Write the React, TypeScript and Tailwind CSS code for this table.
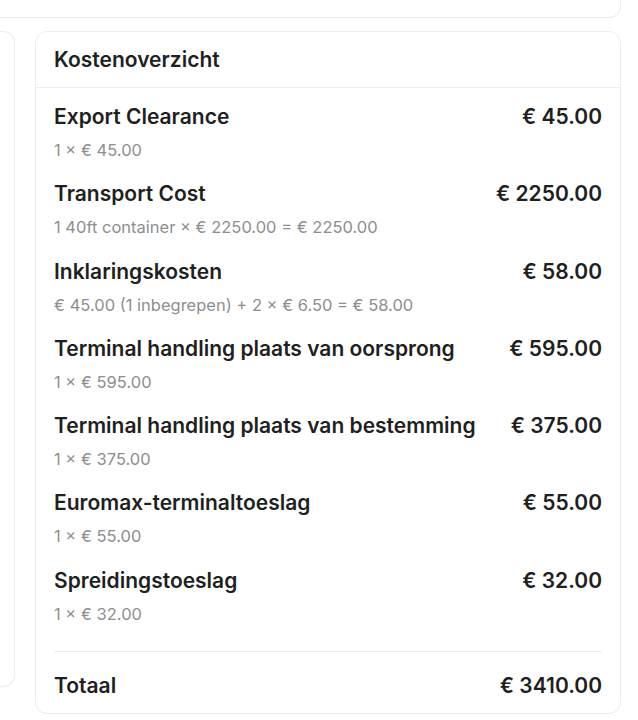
import React from "react";

type CostItem = {
  title: string;
  detail: string;
  amount: string;
};

const items: CostItem[] = [
  { title: "Export Clearance", detail: "1 × € 45.00", amount: "€ 45.00" },
  {
    title: "Transport Cost",
    detail: "1 40ft container × € 2250.00 = € 2250.00",
    amount: "€ 2250.00",
  },
  {
    title: "Inklaringskosten",
    detail: "€ 45.00 (1 inbegrepen) + 2 × € 6.50 = € 58.00",
    amount: "€ 58.00",
  },
  {
    title: "Terminal handling plaats van oorsprong",
    detail: "1 × € 595.00",
    amount: "€ 595.00",
  },
  {
    title: "Terminal handling plaats van bestemming",
    detail: "1 × € 375.00",
    amount: "€ 375.00",
  },
  { title: "Euromax-terminaltoeslag", detail: "1 × € 55.00", amount: "€ 55.00" },
  { title: "Spreidingstoeslag", detail: "1 × € 32.00", amount: "€ 32.00" },
];

const CostRow: React.FC<CostItem> = ({ title, detail, amount }) => (
  <div className="flex flex-col">
    <div className="flex items-start justify-between gap-4">
      <span className="text-[21px] leading-[28px] font-semibold whitespace-nowrap">{title}</span>
      <span className="text-[21px] leading-[28px] font-semibold whitespace-nowrap">
        {amount}
      </span>
    </div>
    <span className="mt-[9px] text-[16.5px] leading-5 text-[#8e8e8e]">
      {detail}
    </span>
  </div>
);

export default function App() {
  return (
    <div className="w-[638px] h-[720px] bg-white pr-[17px] flex flex-col overflow-hidden font-['Inter','Noto_Sans',sans-serif] text-[#1f1f1f]">
      <div className="h-[18px] w-full border-r border-b border-[#ececec] rounded-br-xl" />

      <div className="mt-[13px] flex items-start gap-5">
        <div className="w-[15px] h-[656px] border-y border-r border-[#ececec] rounded-r-xl" />

        <div className="flex-1 border border-[#ececec] rounded-xl">
          <div className="h-[56px] px-[18px] flex items-center border-b border-[#ececec]">
            <h2 className="text-[21px] font-semibold">Kostenoverzicht</h2>
          </div>

          <div className="px-[18px] pt-[15px]">
            <div className="flex flex-col gap-[20.3px]">
              {items.map((item) => (
                <CostRow key={item.title} {...item} />
              ))}
            </div>

            <div className="mt-[27px] border-t border-[#ececec] pt-5 pb-[13px] flex items-center justify-between">
              <span className="text-[21px] leading-[28px] font-semibold">Totaal</span>
              <span className="text-[21px] leading-[28px] font-semibold">€ 3410.00</span>
            </div>
          </div>
        </div>
      </div>
    </div>
  );
}
